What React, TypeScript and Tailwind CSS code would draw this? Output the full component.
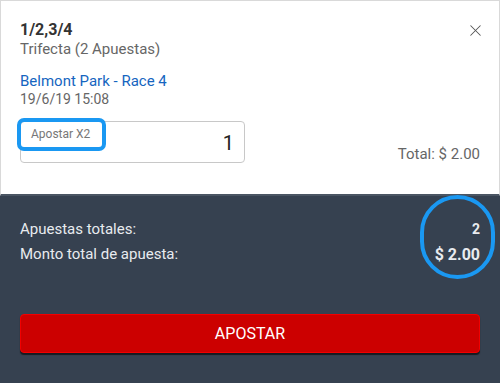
import { X } from "lucide-react";

export default function App() {
  return (
    <div className="h-[383px] w-[500px] overflow-hidden bg-[#364150] font-['Roboto',sans-serif]">
      <div className="relative h-[196px] border border-b-2 border-[#d9d9d9] border-b-[#4a5563] bg-white px-[19px] pt-[19px]">
        <button className="absolute right-[14px] top-[20px] text-[#555]">
          <X className="size-[19px]" strokeWidth={1.3} />
        </button>
        <p className="text-[16px] font-bold leading-[20px] text-[#333]">1/2,3/4</p>
        <p className="text-[15px] leading-[18px] text-[#666]">Trifecta (2 Apuestas)</p>
        <p className="mt-[14px] text-[15px] leading-[18px] text-[#1565c0]">Belmont Park - Race 4</p>
        <p className="text-[14px] leading-[18px] text-[#666]">19/6/19 15:08</p>
        <div className="mt-[13px] flex items-end justify-between">
          <div className="relative flex h-[42px] w-[225px] items-center justify-end rounded-[4px] border border-[#c8c8c8] px-[10px]">
            <span className="absolute left-[10px] top-[5px] text-[12px] leading-[14px] text-[#777]">Apostar X2</span>
            <span className="pt-[2px] text-[20px] text-[#222]">1</span>
            <div className="absolute -left-[4px] -top-[4px] h-[33px] w-[89px] rounded-[7px] border-[4px] border-[#1a98f2]" />
          </div>
          <p className="text-[15px] leading-[18px] text-[#666]">Total: $ 2.00</p>
        </div>
      </div>
      <div className="px-[20px] pt-[21px]">
        <div className="relative">
          <div className="flex justify-between text-[15px] leading-[25px] text-[#e8ebef]">
            <span>Apuestas totales:</span>
            <span className="text-[14px] font-bold">2</span>
          </div>
          <div className="flex items-center justify-between text-[15px] leading-[25px] text-[#e8ebef]">
            <span>Monto total de apuesta:</span>
            <span className="text-[16px] font-bold">$ 2.00</span>
          </div>
          <div className="absolute -right-[15px] -top-[22px] h-[84px] w-[75px] rounded-full border-[4px] border-[#1a98f2]" />
        </div>
        <button className="mt-[47px] h-[39px] w-full rounded-[4px] border border-[#f20000] bg-[#cc0000] text-[16px] text-white shadow-[0_2px_1px_rgba(0,0,0,0.6)]">
          APOSTAR
        </button>
      </div>
    </div>
  );
}
